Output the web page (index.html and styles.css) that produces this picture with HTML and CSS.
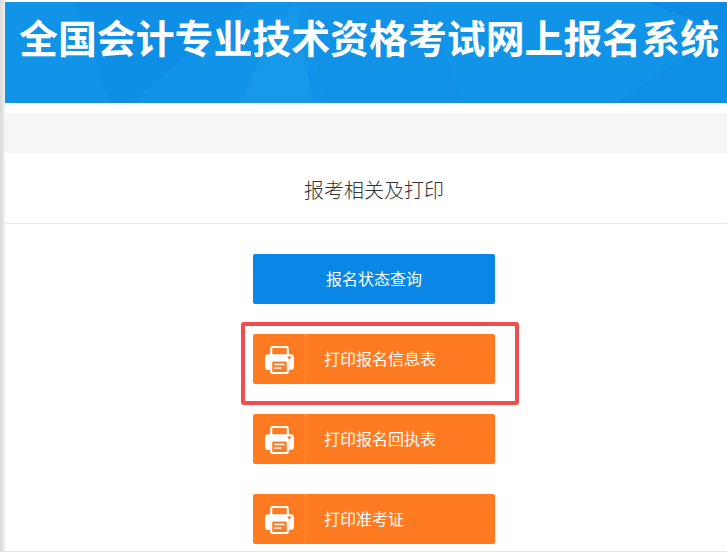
FILE: index.html
```html
<!DOCTYPE html>
<html lang="zh-CN">
<head>
<meta charset="utf-8">
<title>报考相关及打印</title>
<link rel="stylesheet" href="styles.css">
</head>
<body>
<svg width="0" height="0" class="defs">
  <symbol id="printer" viewBox="0 0 28 28">
    <path fill="none" stroke="#fff" stroke-width="2" d="M6 12V3.500A1.500 1.500 0 0 1 7.500 2h13A1.500 1.500 0 0 1 22 3.500V12"/>
    <path fill="#fff" d="M3 9h22a3 3 0 0 1 3 3v9a3 3 0 0 1-3 3h-2v-8H5v8H3a3 3 0 0 1-3-3v-9a3 3 0 0 1 3-3z"/>
    <circle cx="23.500" cy="12" r="1.500" fill="#ff7b22"/>
    <rect x="6" y="15" width="16" height="12" rx="1.500" fill="#ff7b22" stroke="#fff" stroke-width="2"/>
    <path fill="#fff" d="M9 18h10v1.500H9zM9 21.500h7V23H9z"/>
  </symbol>
</svg>
<div class="page">
  <header class="banner">
    <svg class="banner-art" viewBox="0 0 722 101" preserveAspectRatio="none" aria-hidden="true">
      <path d="M70 0h175l-120 101H105z" fill="#0f8ee6"/>
      <path d="M235 101l25-55 30-46 18 101z" fill="#1798e8"/>
      <path d="M300 0h120l40 101H320z" fill="#1292e7"/>
      <path d="M610 101L722 25v76z" fill="#0f8fe6"/>
      <path d="M640 0h82v30z" fill="#0e8be5"/>
    </svg>
    <h1 class="banner-title">全国会计专业技术资格考试网上报名系统</h1>
  </header>
  <div class="band"></div>
  <h2 class="section-title">报考相关及打印</h2>
  <div class="actions">
    <a class="btn btn-blue">报名状态查询</a>
    <a class="btn btn-orange"><span class="btn-icon"><svg class="printer"><use href="#printer"/></svg></span><span class="btn-label">打印报名信息表</span></a>
    <a class="btn btn-orange"><span class="btn-icon"><svg class="printer"><use href="#printer"/></svg></span><span class="btn-label">打印报名回执表</span></a>
    <a class="btn btn-orange"><span class="btn-icon"><svg class="printer"><use href="#printer"/></svg></span><span class="btn-label">打印准考证</span></a>
  </div>
  <div class="highlight"></div>
</div>
</body>
</html>
```
FILE: styles.css
```css
* { box-sizing: border-box; }
html, body { margin: 0; padding: 0; height: 100%; overflow: hidden; background: #fff; }
body {
  font-family: "Noto Sans CJK SC", "Liberation Sans", sans-serif;
  position: relative;
}
.defs { position: absolute; }
.page {
  position: relative;
  height: 552px;
  padding-top: 2px;
  padding-left: 5px;
  background: linear-gradient(to right, #d8d8d8 0, #e6e6e6 3px, #f2f2f2 5px, transparent 5px);
  border-bottom: 1px solid #e4e4e4;
}
.banner {
  position: relative;
  height: 101px;
  background: #1194e8;
  overflow: hidden;
}
.banner-art {
  position: absolute;
  left: 0;
  top: 0;
  width: 100%;
  height: 100%;
}
.banner-title {
  position: relative;
  margin: 0;
  padding: 7px 0 0 14px;
  font-size: 38.9px;
  line-height: 54px;
  font-weight: 700;
  color: #fff;
  white-space: nowrap;
}
.band {
  height: 40px;
  margin-top: 10px;
  background: #f6f6f6;
}
.section-title {
  margin: 0;
  height: 71px;
  line-height: 74px;
  text-align: center;
  font-size: 20px;
  font-weight: 300;
  color: #333;
  border-bottom: 1px solid #eaeaea;
  padding-left: 16px;
}
.actions {
  display: flex;
  flex-direction: column;
  gap: 30px;
  width: 242px;
  margin: 30px 0 0 248px;
}
.btn {
  display: flex;
  align-items: center;
  height: 50px;
  padding-bottom: 2px;
  border-radius: 2px;
  color: #fff;
  font-size: 16px;
}
.btn-blue {
  justify-content: center;
  background: #0a86e6;
}
.btn-orange { background: #ff7b22; padding-bottom: 0; }
.btn-icon {
  display: flex;
  align-items: center;
  justify-content: center;
  width: 53px;
  height: 100%;
  border-right: 1px solid #ff9a55;
}
.printer { width: 29px; height: 29px; }
.btn-label { margin-left: 18px; position: relative; bottom: 1px; }
.highlight {
  position: absolute;
  left: 241px;
  top: 322px;
  width: 278px;
  height: 83px;
  border: 4px solid #ef4e50;
  border-radius: 3px;
}
```
